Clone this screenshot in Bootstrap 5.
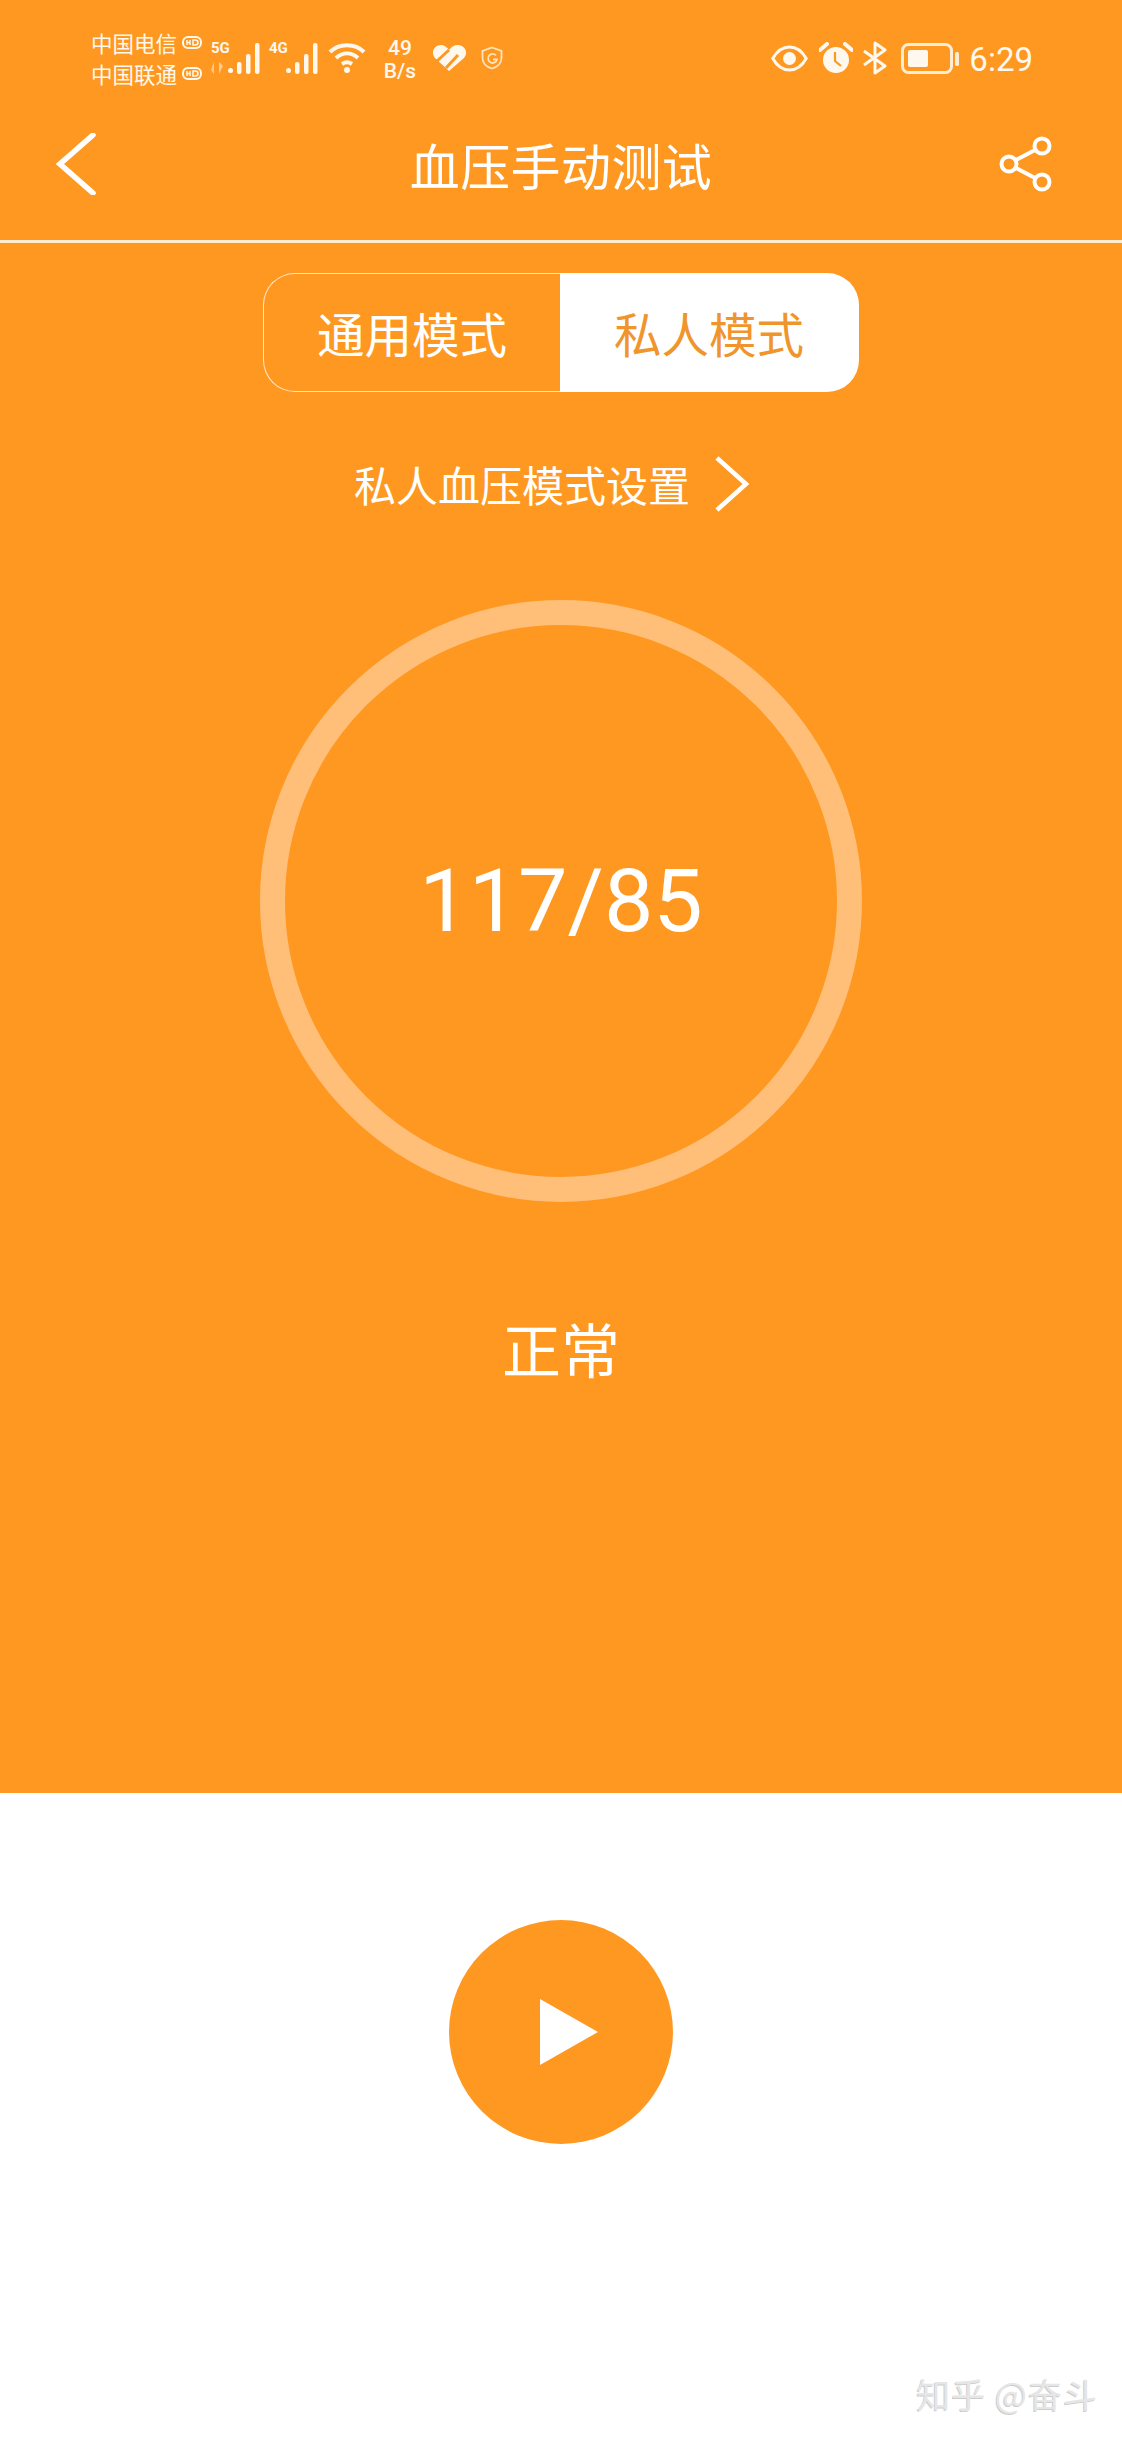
<!DOCTYPE html>
<html lang="zh">
<head>
<meta charset="utf-8">
<title>血压手动测试</title>
<link rel="stylesheet" href="https://cdn.jsdelivr.net/npm/bootstrap@5.3.0/dist/css/bootstrap.min.css">
<style>
html,body{margin:0;background:#fff}
body{font-family:"Noto Sans CJK SC","Noto Sans",sans-serif;width:1122px;height:2442px;overflow:hidden;position:relative}
.sheet{background:#ff9821;height:1793px;color:#fff}
.sbar{height:88px;padding:28px 89px 0 91px;color:#fff8ee}
.carrier{font-size:21.5px;line-height:31px;width:120px;flex:none;font-weight:400;white-space:nowrap}
.hd{flex:none;width:20px;height:13px;margin-left:5px}
.netbox{width:50px;height:32px;flex:none}
.net{font:700 15px/1 "Roboto",sans-serif;margin-top:-1px}
.speed{font:500 21px/23px "Roboto",sans-serif;text-align:center;width:36px;margin-left:16px;margin-top:3px;flex:none}
.clock{font:400 33px/1 "Roboto",sans-serif;margin-left:10px;margin-top:3px}
.topnav{height:152px;border-bottom:3px solid #ffeccf;padding:0 70px 0 56px;box-sizing:content-box}
.pagetitle{font-size:50px;line-height:1;font-weight:400;margin:0;letter-spacing:.4px}
.seg{width:597px;height:119px;margin:30px auto 0}
.seg .btn{--bs-btn-border-radius:32px;font-size:47.5px;line-height:1;flex:0 0 auto;display:flex;align-items:center;justify-content:center;padding:0}
.segoff{width:298px;color:#fff;border:1.5px solid #ffe9c8;border-right:0;background:transparent}
.segon{width:299px;color:#f0952c;background:#fff;border:0}
.segoff:hover{color:#fff;background:transparent;border-color:#ffe9c8}
.segon:hover{color:#f0952c;background:#fff}
.setrow{height:100px;margin-top:42px;padding-right:18px;font-size:42px;line-height:1;gap:24px}
.ringbox{width:602px;height:602px;margin:66px auto 0;border:25px solid #ffbf79;border-radius:50%}
.bp{font:400 88px/1 "Roboto",sans-serif;letter-spacing:0}
.verdict{font-size:59px;line-height:1;text-align:center;margin-top:116px}
.lower{height:649px}
.playbtn{width:224px;height:224px;border-radius:50%;background:#ff9821;border:0;margin-top:127px;padding:0}
.mark-wm{position:absolute;right:24px;bottom:31px;font-size:34px;line-height:1;color:#e6e6e6;letter-spacing:1px;text-shadow:-1px 1px 0 #cdcdcd}
</style>
</head>
<body>
<div class="sheet">
  <div class="sbar d-flex align-items-center">
    <div class="carrier">
      <div class="d-flex align-items-center">中国电信<svg class="hd" viewBox="0 0 20 13" aria-hidden="true"><rect x="1" y="1" width="18" height="11" rx="5" fill="none" stroke="#fff8ee" stroke-width="2"/><path d="M5 4v5M8 4v5M5 6.500h3M11 4v5h2c2 0 3-1 3-2.500s-1-2.500-3-2.500z" fill="none" stroke="#fff8ee" stroke-width="1.500"/></svg></div>
      <div class="d-flex align-items-center">中国联通<svg class="hd" viewBox="0 0 20 13" aria-hidden="true"><rect x="1" y="1" width="18" height="11" rx="5" fill="none" stroke="#fff8ee" stroke-width="2"/><path d="M5 4v5M8 4v5M5 6.500h3M11 4v5h2c2 0 3-1 3-2.500s-1-2.500-3-2.500z" fill="none" stroke="#fff8ee" stroke-width="1.500"/></svg></div>
    </div>
    <div class="netbox position-relative">
      <span class="net position-absolute top-0 start-0">5G</span>
      <svg class="position-absolute bottom-0 start-0" width="14" height="12" viewBox="0 0 14 12" fill="#ffc98c" aria-hidden="true"><path d="M3 0v12L0 8zM8 12V0l4 4z"/></svg>
      <svg class="position-absolute bottom-0 end-0" width="33" height="31" viewBox="0 0 33 31" fill="#fff8ee" aria-hidden="true"><rect x="0" y="25" width="5" height="5" rx="2.500"/><rect x="9" y="19" width="4.500" height="12" rx="2"/><rect x="18" y="11" width="4.500" height="20" rx="2"/><rect x="27" y="0" width="4.500" height="31" rx="2"/></svg>
    </div>
    <div class="netbox position-relative ms-2">
      <span class="net position-absolute top-0 start-0">4G</span>
      <svg class="position-absolute bottom-0 end-0" width="33" height="31" viewBox="0 0 33 31" fill="#fff8ee" aria-hidden="true"><rect x="0" y="25" width="5" height="5" rx="2.500"/><rect x="9" y="19" width="4.500" height="12" rx="2"/><rect x="18" y="11" width="4.500" height="20" rx="2"/><rect x="27" y="0" width="4.500" height="31" rx="2"/></svg>
    </div>
    <svg width="38" height="32" viewBox="0 0 38 32" fill="none" stroke="#fff8ee" stroke-width="4" style="margin-left:9px;flex:none" aria-hidden="true"><path d="M2 10C11 1 27 1 36 10M8 16c7-6 15-6 22 0M14 22c3-2 7-2 10 0"/><circle cx="19" cy="28" r="3" fill="#fff8ee" stroke="none"/></svg>
    <div class="speed">49<br>B/s</div>
    <svg width="34" height="28" viewBox="0 0 34 28" style="margin-left:14px;flex:none" aria-hidden="true"><path d="M17 27 3 14C-2 8 3 1 9 1c3 0 6 2 8 5 2-3 5-5 9-5 6 0 11 7 6 13z" fill="#fff8ee"/><path d="M5 17 17 6M14 24 26 11" stroke="#ff9821" stroke-width="3" fill="none"/></svg>
    <svg width="22" height="24" viewBox="0 0 22 24" fill="none" stroke="#ffe4bd" stroke-width="1.800" style="margin-left:15px;flex:none" aria-hidden="true"><path d="M11 1.500 20.500 5v7c0 5-4 9-9.500 10.500C5.500 21 1.500 17 1.500 12V5z"/><path d="M15 9.500a4.500 4.500 0 1 0 1 4h-4"/></svg>
    <div class="ms-auto d-flex align-items-center">
      <svg width="37" height="27" viewBox="0 0 37 27" fill="none" stroke="#fff8ee" stroke-width="3" aria-hidden="true"><path d="M1.800 13.500C6 6 12 2 18.500 2s12.500 4 16.700 11.500C31 21 25 25 18.500 25S6 21 1.800 13.500z"/><circle cx="18.500" cy="13.500" r="6.500" fill="#fff8ee" stroke="none"/></svg>
      <svg width="34" height="32" viewBox="0 0 34 32" style="margin-left:11px" aria-hidden="true"><circle cx="17" cy="18" r="13" fill="#fff8ee"/><path d="M1 8 8 2M33 8l-7-6" stroke="#fff8ee" stroke-width="4" stroke-linecap="round"/><path d="M16 10v9l6 5" stroke="#ff9821" stroke-width="2.200" fill="none"/></svg>
      <svg width="26" height="34" viewBox="0 0 26 34" fill="none" stroke="#fff8ee" stroke-width="3" stroke-linejoin="round" style="margin-left:9px" aria-hidden="true"><path d="M2 10 23 25 13 32V2l10 7L2 24"/></svg>
      <svg width="58" height="31" viewBox="0 0 58 31" style="margin-left:13px" aria-hidden="true"><rect x="1.500" y="1.500" width="49" height="28" rx="6" fill="none" stroke="#ffecd2" stroke-width="3"/><rect x="7" y="7" width="20" height="17" rx="2" fill="#fff8ee"/><rect x="54" y="9" width="4" height="14" rx="1.500" fill="#ffecd2"/></svg>
      <span class="clock">6:29</span>
    </div>
  </div>

  <div class="topnav d-flex align-items-center justify-content-between position-relative">
    <svg width="40" height="62" viewBox="0 0 40 62" fill="none" stroke="#fff" stroke-width="5.500" aria-hidden="true"><path d="M37 2 4 31l33 29" stroke-linecap="round" stroke-linejoin="miter"/></svg>
    <h1 class="pagetitle position-absolute top-50 start-50 translate-middle text-nowrap">血压手动测试</h1>
    <svg width="54" height="56" viewBox="0 0 54 56" fill="none" stroke="#fff" stroke-width="4" aria-hidden="true" class="ms-auto" style="margin-right:-1px"><circle cx="10" cy="28" r="7.500"/><circle cx="43" cy="10" r="7.500"/><circle cx="43" cy="46" r="7.500"/><path d="M17 24 36 14M17 32l19 10"/></svg>
  </div>

  <div class="seg btn-group d-flex" role="group">
    <button type="button" class="btn segoff">通用模式</button>
    <button type="button" class="btn segon">私人模式</button>
  </div>

  <div class="setrow d-flex align-items-center justify-content-center">
    <span>私人血压模式设置</span>
    <svg width="36" height="56" viewBox="0 0 36 56" fill="none" stroke="#fff" stroke-width="4.500" aria-hidden="true"><path d="M3 2 32 28 3 54"/></svg>
  </div>

  <div class="ringbox d-flex align-items-center justify-content-center">
    <span class="bp">117/85</span>
  </div>

  <div class="verdict">正常</div>
</div>

<div class="lower text-center">
  <button type="button" class="playbtn btn d-inline-flex align-items-center justify-content-center" aria-label="play">
    <svg width="58" height="66" viewBox="0 0 58 66" aria-hidden="true" style="margin-left:15px"><path d="M0 0 58 33 0 66z" fill="#fff"/></svg>
  </button>
</div>
<div class="mark-wm">知乎 @奋斗</div>
</body>
</html>
